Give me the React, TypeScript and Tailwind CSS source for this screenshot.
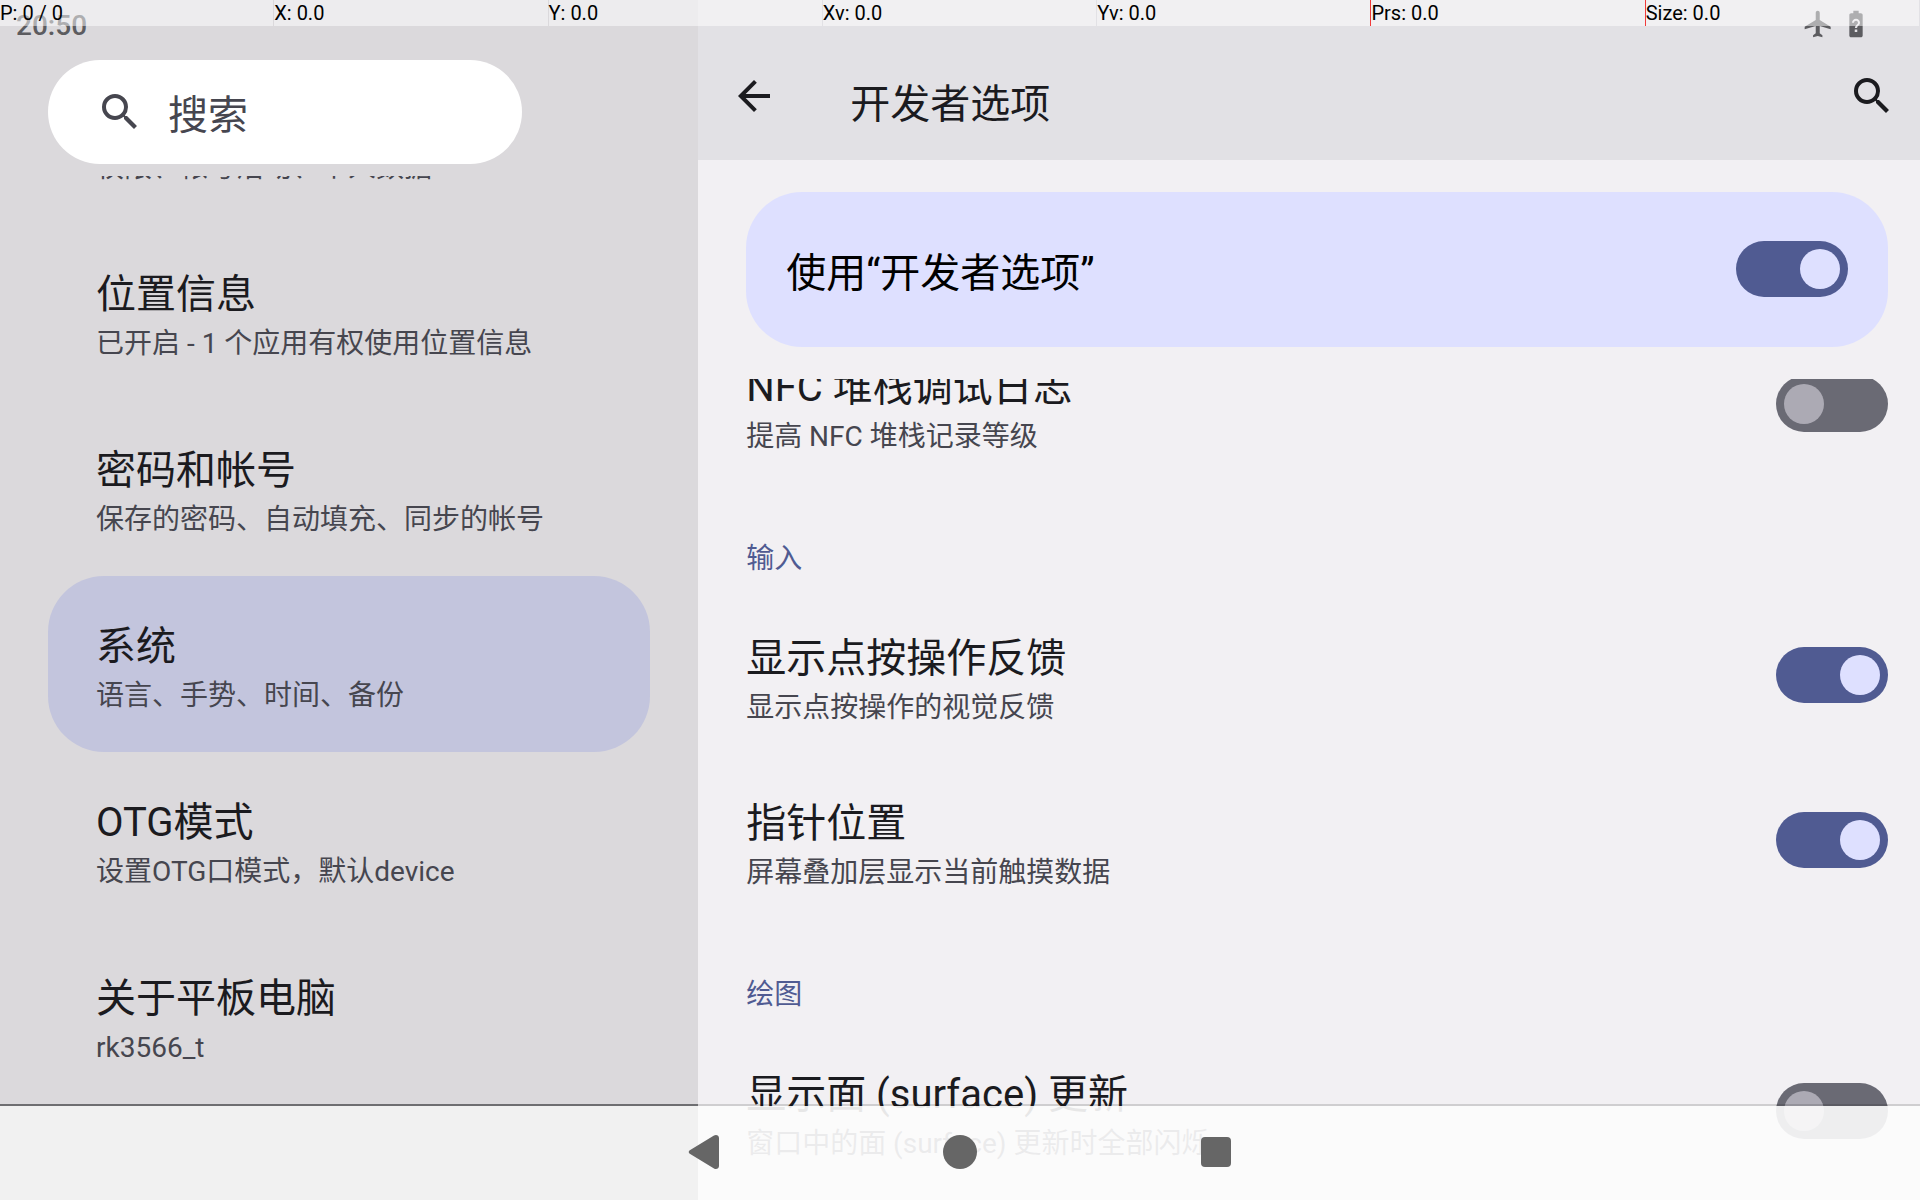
import { useState } from 'react';
import { MdArrowBack, MdBatteryUnknown, MdSearch } from 'react-icons/md';

interface MenuItem { id: string; title: string; summary: string; }
interface SwitchItem { id: string; title: string; summary: string; }
interface Section { heading?: string; items: SwitchItem[]; }

const menuItems: MenuItem[] = [
  { id: 'privacy', title: '隐私', summary: '权限、帐号活动、个人数据' },
  { id: 'location', title: '位置信息', summary: '已开启 - 1 个应用有权使用位置信息' },
  { id: 'accounts', title: '密码和帐号', summary: '保存的密码、自动填充、同步的帐号' },
  { id: 'system', title: '系统', summary: '语言、手势、时间、备份' },
  { id: 'otg', title: 'OTG模式', summary: '设置OTG口模式，默认device' },
  { id: 'about', title: '关于平板电脑', summary: 'rk3566_t' },
];

const sections: Section[] = [
  { items: [{ id: 'nfc', title: 'NFC 堆栈调试日志', summary: '提高 NFC 堆栈记录等级' }] },
  {
    heading: '输入',
    items: [
      { id: 'taps', title: '显示点按操作反馈', summary: '显示点按操作的视觉反馈' },
      { id: 'pointer', title: '指针位置', summary: '屏幕叠加层显示当前触摸数据' },
    ],
  },
  {
    heading: '绘图',
    items: [{ id: 'surface', title: '显示面 (surface) 更新', summary: '窗口中的面 (surface) 更新时全部闪烁' }],
  },
];

// red = divider after the cell is drawn in red
const pointerCells = [
  { text: 'P: 0 / 0', red: false },
  { text: 'X: 0.0', red: false },
  { text: 'Y: 0.0', red: false },
  { text: 'Xv: 0.0', red: false },
  { text: 'Yv: 0.0', red: true },
  { text: 'Prs: 0.0', red: true },
  { text: 'Size: 0.0', red: false },
];

const Switch = ({ id, checked, onChange }: { id: string; checked: boolean; onChange: () => void }) => (
  <input
    id={id}
    type="checkbox"
    role="switch"
    checked={checked}
    onChange={onChange}
    className="h-14 w-28 shrink-0 appearance-none rounded-full bg-[#6a6a74] p-2 before:block before:size-10 before:rounded-full before:bg-[#acaab4] checked:bg-[#505b92] checked:before:translate-x-14 checked:before:bg-[#dee0ff]"
  />
);

const ItemText = ({ title, summary }: { title: string; summary: string }) => (
  <>
    <span className="block text-[40px] leading-14 text-[#1b1b1f]">{title}</span>
    <span className="block text-[28px] leading-[42px] text-[#46464f]">{summary}</span>
  </>
);

const Sidebar = () => (
  <aside className="flex w-4/11 shrink-0 flex-col bg-[#dbd9dc]">
    <div className="pt-15 pr-44 pb-3 pl-12">
      <label className="flex h-26 items-center gap-6 rounded-full bg-white px-12 text-[#46464f]">
        <MdSearch className="size-12 shrink-0" />
        <input
          type="text"
          aria-label="搜索"
          placeholder="搜索"
          className="w-full min-w-0 bg-transparent pt-2 text-[40px] leading-14 outline-none placeholder:text-[#46464f]"
        />
      </label>
    </div>
    <nav className="min-h-0 flex-1 overflow-hidden px-12">
      <ul className="-mt-32">
        {menuItems.map((item) => (
          <li key={item.id}>
            <a
              href={`#${item.id}`}
              className={`flex h-44 flex-col justify-center rounded-[56px] px-12 pt-2 whitespace-nowrap ${item.id === 'system' ? 'bg-[#c3c5dd]' : ''}`}
            >
              <ItemText title={item.title} summary={item.summary} />
            </a>
          </li>
        ))}
      </ul>
    </nav>
    <div className="h-24 shrink-0 bg-[#808084]" />
  </aside>
);

const DeveloperOptions = () => {
  const [enabled, setEnabled] = useState<Record<string, boolean>>({ main: true, taps: true, pointer: true });
  const toggle = (id: string) => setEnabled((prev) => ({ ...prev, [id]: !prev[id] }));

  return (
    <main className="flex min-w-0 flex-1 flex-col bg-[#f2f0f3]">
      <header className="flex h-40 shrink-0 items-center bg-[#e2e1e5] px-8 pt-8 pr-6 text-[#1b1b1f]">
        <button aria-label="返回"><MdArrowBack className="size-12" /></button>
        <h1 className="ml-18 flex-1 pt-[18px] text-[40px] leading-14">开发者选项</h1>
        <button aria-label="搜索设置"><MdSearch className="size-12" /></button>
      </header>

      <div className="my-8 mr-8 ml-12 flex h-[155px] shrink-0 items-center justify-between rounded-[56px] bg-[#dee0ff] px-10 pb-0.5">
        <label htmlFor="main" className="pt-2.5 text-[40px] leading-14 text-black">使用“开发者选项”</label>
        <Switch id="main" checked={!!enabled.main} onChange={() => toggle('main')} />
      </div>

      <div className="min-h-0 flex-1 overflow-hidden pr-8 pl-12">
        <div className="-mt-[58px]">
          {sections.map((section, i) => (
            <section key={i}>
              {section.heading && (
                <h2 className="h-[106px] pt-[53px] text-[28px] leading-10 text-[#505b92]">{section.heading}</h2>
              )}
              {section.items.map((item) => (
                <div key={item.id} className="flex h-[165px] items-center justify-between">
                  <label htmlFor={item.id} className="pt-2.5 whitespace-nowrap">
                    <ItemText title={item.title} summary={item.summary} />
                  </label>
                  <Switch id={item.id} checked={!!enabled[item.id]} onChange={() => toggle(item.id)} />
                </div>
              ))}
            </section>
          ))}
        </div>
      </div>
    </main>
  );
};

const StatusBar = () => (
  <div className="absolute inset-x-0 top-0 flex h-12 items-center justify-between pr-12 pl-4 text-[#5c5c60]">
    <span className="pt-1 text-[28px] leading-8 font-medium">20:50</span>
    <div className="flex items-center gap-1.5">
      <svg viewBox="0 0 24 24" className="size-8" fill="currentColor">
        <path d="M21.500 16v-2L13.300 9V3.500c0-.83-.67-1.500-1.500-1.500s-1.500.67-1.500 1.500V9L2 14v2l8.300-2.500V19l-2 1.500V22l3.500-1 3.500 1v-1.500l-2-1.500v-5.500l8.200 2.500z" />
      </svg>
      <MdBatteryUnknown className="size-8" />
    </div>
  </div>
);

const PointerBar = () => (
  <div className="absolute inset-x-0 top-0 grid h-[26px] grid-cols-7">
    {pointerCells.map((cell) => (
      <div
        key={cell.text}
        className={`border-r bg-white/50 bg-clip-padding text-xl leading-[26px] text-black ${cell.red ? 'border-[#f03a3a]' : 'border-transparent'}`}
      >
        {cell.text}
      </div>
    ))}
  </div>
);

const NavigationBar = () => (
  <div className="absolute inset-x-0 bottom-0 flex h-24 items-center justify-center border-t-2 border-black/14 bg-[#fcfcfc]/91 bg-clip-padding pb-0.5 text-[#666666]">
    <button aria-label="后退" className="flex w-64 justify-center">
      <svg viewBox="0 0 48 48" className="size-12" fill="currentColor">
        <path d="M9.800 22.200 34 7.600c2-1.200 5-.4 5 2.400v28c0 2.800-3 3.600-5 2.400L9.800 25.800c-1.400-.9-1.400-2.700 0-3.600z" />
      </svg>
    </button>
    <button aria-label="主屏幕" className="flex w-64 justify-center">
      <svg viewBox="0 0 48 48" className="size-12" fill="currentColor">
        <circle cx="24" cy="24" r="17" />
      </svg>
    </button>
    <button aria-label="最近任务" className="flex w-64 justify-center">
      <svg viewBox="0 0 48 48" className="size-12" fill="currentColor">
        <rect x="9" y="9" width="30" height="30" rx="4" />
      </svg>
    </button>
  </div>
);

export default function App() {
  return (
    <div className="relative flex h-screen overflow-hidden font-['Roboto','Noto_Sans_CJK_SC',sans-serif]" lang="zh-CN">
      <Sidebar />
      <DeveloperOptions />
      <StatusBar />
      <PointerBar />
      <NavigationBar />
    </div>
  );
}
